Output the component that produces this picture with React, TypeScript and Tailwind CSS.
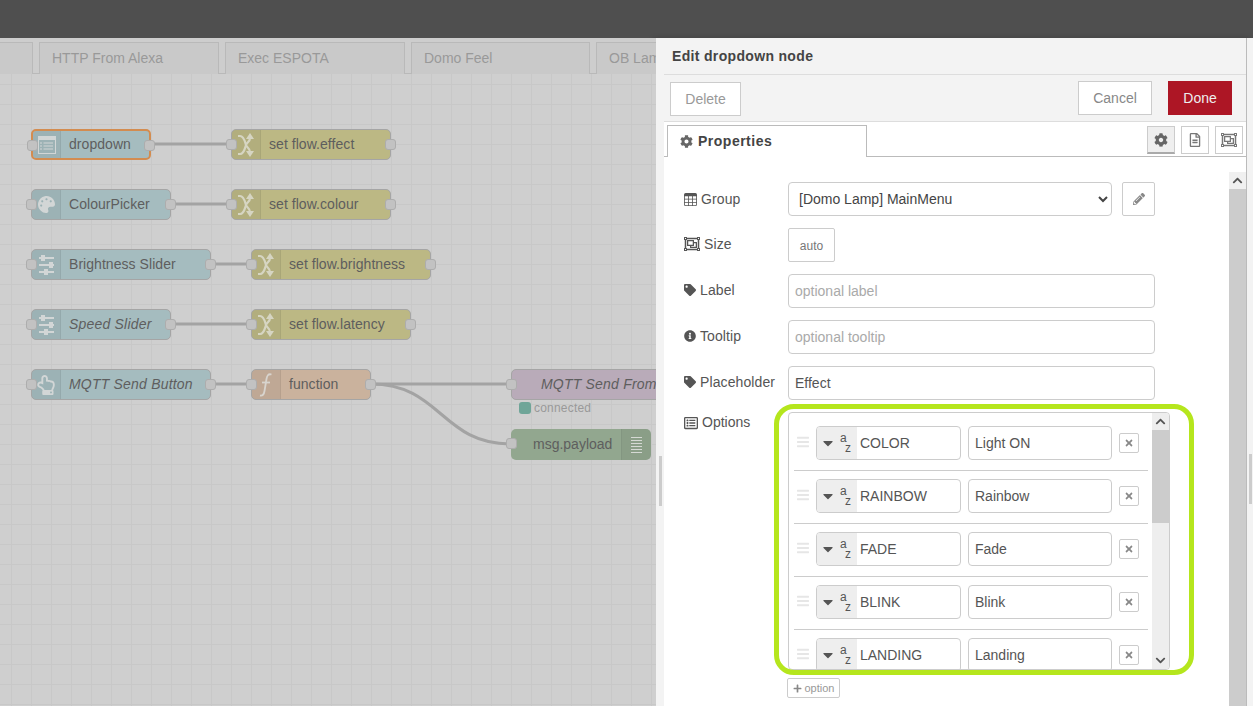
import React from "react";
import {
  FaCaretDown,
  FaChevronDown,
  FaChevronUp,
  FaCog,
  FaBars,
  FaInfoCircle,
  FaPalette,
  FaPencilAlt,
  FaPlus,
  FaRegFileAlt,
  FaRegHandPointUp,
  FaRegListAlt,
  FaRegObjectGroup,
  FaTag,
  FaTimes,
} from "react-icons/fa";
import { BsTable } from "react-icons/bs";

const SwapIcon = () => (
  <svg width="16" height="24" viewBox="0 0 16 24" fill="none" stroke="#d6d5c2" strokeWidth="2.2">
    <path d="M0 21 H2 C6 21 7 15 8 12 C9 9 12 9 12 5" />
    <path d="M0 3 H2 C6 3 7 9 8 12 C9 15 12 15 12 19" />
    <path d="M12 0 L16 6 L8 6 Z" fill="#d6d5c2" stroke="none" />
    <path d="M12 24 L16 18 L8 18 Z" fill="#d6d5c2" stroke="none" />
  </svg>
);

const DropdownIcon = () => (
  <svg width="18" height="18" viewBox="0 0 18 18" fill="none" stroke="#d2d6d6" strokeWidth="1">
    <rect x="0.5" y="0.5" width="17" height="17" />
    <rect x="0.5" y="0.5" width="17" height="3" fill="#d2d6d6" />
    <path d="M2 7H4M5.5 7H15M2 10H4M5.5 10H15M2 13H4M5.5 13H15" />
  </svg>
);

const SliderIcon = () => (
  <svg width="15" height="20" viewBox="0 0 15 20" fill="#d2d6d6" stroke="none">
    <rect x="0" y="2" width="15" height="2" />
    <rect x="0" y="9" width="15" height="2" />
    <rect x="0" y="16" width="15" height="2" />
    <rect x="2" y="0" width="4" height="6" />
    <rect x="10" y="7" width="4" height="6" />
    <rect x="5" y="14" width="4" height="6" />
  </svg>
);

const FunctionIcon = () => (
  <svg width="14" height="24" viewBox="0 0 14 24" fill="none" stroke="#d8d4ce" strokeWidth="1.8">
    <path d="M12.5 1.5 C9 0.5 8 3 7.5 6 L5.5 18 C5 21.5 3.5 23 1 22.5" />
    <path d="M3 9.5H11" />
  </svg>
);

const canvasNodes = [
  { left: 31, top: 129, width: 120, label: "dropdown", bg: "bg-[#a5bcbf]", icon: <DropdownIcon />, selected: true },
  { left: 231, top: 129, width: 160, label: "set flow.effect", bg: "bg-[#bcb884]", icon: <SwapIcon /> },
  { left: 31, top: 189, width: 140, label: "ColourPicker", bg: "bg-[#a5bcbf]", icon: <FaPalette size={17} color="#d2d6d6" /> },
  { left: 231, top: 189, width: 160, label: "set flow.colour", bg: "bg-[#bcb884]", icon: <SwapIcon /> },
  { left: 31, top: 249, width: 180, label: "Brightness Slider", bg: "bg-[#a5bcbf]", icon: <SliderIcon /> },
  { left: 251, top: 249, width: 180, label: "set flow.brightness", bg: "bg-[#bcb884]", icon: <SwapIcon /> },
  { left: 31, top: 309, width: 140, label: "Speed Slider", italic: true, bg: "bg-[#a5bcbf]", icon: <SliderIcon /> },
  { left: 251, top: 309, width: 160, label: "set flow.latency", bg: "bg-[#bcb884]", icon: <SwapIcon /> },
  { left: 31, top: 369, width: 180, label: "MQTT Send Button", italic: true, bg: "bg-[#a5bcbf]", icon: <FaRegHandPointUp size={20} color="#d2d6d6" /> },
  { left: 251, top: 369, width: 120, label: "function", bg: "bg-[#cab29d]", icon: <FunctionIcon /> },
];

const wires = [
  "M151 144H231",
  "M171 204H231",
  "M211 264H251",
  "M171 324H251",
  "M211 384H251",
  "M371 384H511",
  "M371 384C441 384 441 444 511 444",
];

const tabs = ["", "HTTP From Alexa", "Exec ESPOTA", "Domo Feel", "OB Lamp"];

const options = [
  { key: "COLOR", value: "Light ON" },
  { key: "RAINBOW", value: "Rainbow" },
  { key: "FADE", value: "Fade" },
  { key: "BLINK", value: "Blink" },
  { key: "LANDING", value: "Landing" },
];

const Port = ({ className }: { className: string }) => (
  <div className={`absolute top-[9px] h-[11px] w-[11px] rounded-[3px] border border-[#adadad] bg-[#c2c2c2] ${className}`} />
);

type NodeProps = {
  left: number;
  top: number;
  width: number;
  label: string;
  bg: string;
  icon: React.ReactNode;
  italic?: boolean;
  selected?: boolean;
};

const FlowNode = ({ left, top, width, label, bg, icon, italic, selected }: NodeProps) => (
  <div
    className={`absolute flex h-[31px] items-center rounded-[5px] border ${selected ? "border-[#d38c50] border-[2px]" : "border-[#a5a5a5]"} ${bg}`}
    style={{ left, top, width }}
  >
    <div className={`flex h-full shrink-0 items-center justify-center rounded-l-[4px] border-r border-black/5 bg-black/5 ${selected ? "w-[28px]" : "w-[29px]"}`}>{icon}</div>
    <span className={`ml-[8px] whitespace-nowrap text-[14px] text-[#5e5e5e] ${italic ? "italic tracking-[0.2px]" : "tracking-[0.05px]"}`}>{label}</span>
    <Port className="left-[-6px]" />
    <Port className="right-[-6px]" />
  </div>
);

const Canvas = () => (
  <div className="relative min-w-0 flex-1 overflow-hidden bg-[#cfcfcf]">
    <div className="flex h-[36px] gap-[6px] border-b border-[#b9b9b9] bg-[#cdcdcd] pt-[4px] pl-[0px]">
      {tabs.map((t, i) => (
        <div
          key={i}
          className={`h-[32px] shrink-0 border border-b-0 border-[#b9b9b9] bg-[#c9c9c9] pl-[12px] text-[14px] leading-[30px] whitespace-nowrap text-[#999999] ${
            i === 0 ? "ml-[-147px] w-[180px]" : i === 3 ? "w-[179px]" : "w-[180px]"
          }`}
        >
          {t}
        </div>
      ))}
    </div>
    <div className="relative h-[632px] bg-[linear-gradient(#c8c8c8_1px,transparent_1px),linear-gradient(90deg,#c8c8c8_1px,transparent_1px)] bg-[size:20px_20px] bg-[position:11px_10px]">
      <svg className="absolute top-[-74px] left-0" width="656" height="706" fill="none" stroke="#a3a3a3" strokeWidth="3">
        {wires.map((d) => (
          <path key={d} d={d} />
        ))}
      </svg>
      <div className="absolute top-[-74px] left-0 h-[706px] w-[656px]">
        {canvasNodes.map((n) => (
          <FlowNode key={n.label} {...n} />
        ))}
        <div className="absolute top-[369px] left-[511px] flex h-[31px] w-[200px] items-center rounded-[5px] border border-[#a5a5a5] bg-[#b9abb9]">
          <span className="ml-[29px] text-[14px] tracking-[0.2px] whitespace-nowrap text-[#5e5e5e] italic">MQTT Send From</span>
          <Port className="left-[-6px]" />
        </div>
        <div className="absolute top-[402px] left-[519px] flex items-center">
          <div className="h-[12px] w-[12px] rounded-[3px] bg-[#6fa598]" />
          <span className="ml-[3px] text-[12px] leading-[12px] tracking-[0.2px] text-[#999999]">connected</span>
        </div>
        <div className="absolute top-[429px] left-[511px] flex h-[31px] w-[140px] items-center rounded-[5px] bg-[#92a78f]">
          <span className="ml-[22px] text-[14px] whitespace-nowrap text-[#5e5e5e]">msg.payload</span>
          <div className="ml-auto flex h-full w-[30px] flex-col items-center justify-center gap-[2px] rounded-r-[5px] border-l border-black/5 bg-black/5">
            {[0, 1, 2, 3, 4, 5].map((i) => (
              <div key={i} className="h-[1px] w-[11px] bg-[#d5d9d4]" />
            ))}
          </div>
          <Port className="left-[-5px]" />
        </div>
      </div>
    </div>
  </div>
);

const FormRow = ({ icon, label, raised = true, children }: { icon: React.ReactNode; label: string; raised?: boolean; children: React.ReactNode }) => (
  <div className="flex h-[34px] items-center">
    <div className={`flex w-[104px] shrink-0 items-center gap-[4px] text-[14px] tracking-[0.1px] text-[#555555] ${raised ? "pb-[2px]" : ""}`}>
      {icon}
      <span>{label}</span>
    </div>
    {children}
  </div>
);

const TextField = ({ placeholder, value }: { placeholder: string; value?: string }) => (
  <input
    readOnly
    placeholder={placeholder}
    value={value ?? ""}
    className="h-[34px] w-[367px] rounded-[4px] border border-[#cccccc] px-[6px] text-[14px] text-[#555555] placeholder:text-[#aaaaaa]"
  />
);

const OptionRow = ({ optionKey, value, last }: { optionKey: string; value: string; last: boolean }) => (
  <div className={`flex shrink-0 items-start pt-[8px] pb-[10px] ${last ? "" : "h-[53px] border-b border-[#cccccc]"}`}>
    <FaBars size={14} color="#e6e6e6" className="mt-[9px] ml-[3px] w-[12px] shrink-0" />
    <div className="ml-[7px] flex h-[34px] w-[145px] shrink-0 overflow-hidden rounded-[4px] border border-[#cccccc]">
      <div className="flex w-[40px] shrink-0 items-center bg-[#eeeeee] pl-[3px] text-[#555555]">
        <FaCaretDown size={16} />
        <div className="ml-[4px] flex flex-col text-[12px] leading-[10px]">
          <span>a</span>
          <span className="ml-[5px]">z</span>
        </div>
      </div>
      <span className="pl-[3px] text-[14px] leading-[32px] text-[#555555]">{optionKey}</span>
    </div>
    <div className="ml-[7px] h-[34px] w-[144px] shrink-0 rounded-[4px] border border-[#cccccc] pl-[6px] text-[14px] leading-[32px] text-[#555555]">{value}</div>
    <div className="mt-[7px] ml-[7px] flex h-[20px] w-[20px] shrink-0 items-center justify-center rounded-[2px] border border-[#cccccc]">
      <FaTimes size={10} color="#888888" />
    </div>
  </div>
);

const OptionsList = () => (
  <div className="relative h-[258px] w-[382px]">
    <div className="flex h-full w-full overflow-hidden rounded-[4px] border border-[#cccccc]">
      <div className="flex min-w-0 flex-1 flex-col overflow-hidden pt-[5px] pr-[4px] pl-[5px]">
        {options.map((o, i) => (
          <OptionRow key={o.key} optionKey={o.key} value={o.value} last={i === options.length - 1} />
        ))}
      </div>
      <div className="flex w-[17px] shrink-0 flex-col bg-[#eeeeee]">
        <div className="flex h-[17px] items-center justify-center">
          <FaChevronUp size={11} color="#555555" />
        </div>
        <div className="h-[93px] bg-[#cccccc]" />
        <div className="mt-auto flex h-[17px] items-center justify-center">
          <FaChevronDown size={11} color="#555555" />
        </div>
      </div>
    </div>
    {/* green highlight someone drew over the screenshot */}
    <div className="pointer-events-none absolute top-[-8px] left-[-14px] h-[271px] w-[420px] rounded-[20px] border-[5px] border-[#b5e61d]" />
  </div>
);

const Tray = () => (
  <div className="flex w-[597px] shrink-0 bg-[#f3f3f3] shadow-[-3px_0_5px_rgba(0,0,0,0.18)]">
    <div className="flex w-[8px] shrink-0 items-start justify-center">
      <div className="mt-[418px] h-[50px] w-[3px] bg-[#cccccc]" />
    </div>
    <div className="flex w-[583px] shrink-0 flex-col border-r border-[#bbbbbb] bg-white">
      <div className="h-[37px] shrink-0 border-b border-[#dddddd] bg-[#f3f3f3] pl-[8px] text-[14px] leading-[36px] font-bold tracking-[0.33px] text-[#444444]">
        Edit dropdown node
      </div>
      <div className="flex h-[47px] shrink-0 items-start justify-between border-b border-[#dddddd] bg-[#f3f3f3] pt-[6px] pr-[14px] pl-[6px]">
        <button className="mt-[1px] h-[34px] w-[71px] border border-[#cccccc] bg-white text-[14px] text-[#999999]">Delete</button>
        <div className="flex gap-[16px]">
          <button className="h-[34px] w-[74px] border border-[#cccccc] bg-white text-[14px] text-[#888888]">Cancel</button>
          <button className="h-[34px] w-[64px] bg-[#ad1625] text-[14px] text-[#eeeeee]">Done</button>
        </div>
      </div>
      <div className="relative flex h-[35px] shrink-0 items-start justify-end gap-[6px] border-b border-[#bbbbbb] pt-[4px] pr-[3px]">
        <div className="absolute top-[3px] left-[3px] flex h-[32px] w-[200px] items-center gap-[5px] border border-b-0 border-[#bbbbbb] bg-white pl-[12px] text-[14px] font-bold tracking-[0.5px] text-[#444444]">
          <FaCog size={13} color="#666666" />
          Properties
        </div>
        <div className="flex h-[28px] w-[28px] items-center justify-center border border-b-[2px] border-[#cccccc] border-b-[#aaaaaa] bg-[#efefef]">
          <FaCog size={14} color="#666666" />
        </div>
        <div className="flex h-[28px] w-[28px] items-center justify-center border border-[#cccccc]">
          <FaRegFileAlt size={14} color="#777777" />
        </div>
        <div className="flex h-[28px] w-[28px] items-center justify-center border border-[#cccccc]">
          <FaRegObjectGroup size={16} color="#777777" />
        </div>
      </div>
      <div className="flex min-h-0 flex-1 pt-[15px]">
        <div className="flex min-w-0 flex-1 flex-col gap-[12px] pt-[10px] pl-[20px]">
          <FormRow icon={<BsTable size={13} />} label="Group" raised={false}>
            <select className="h-[34px] w-[324px] rounded-[4px] border border-[#cccccc] pl-[6px] text-[14px] text-[#444444]">
              <option>[Domo Lamp] MainMenu</option>
            </select>
            <div className="ml-[10px] flex h-[34px] w-[33px] items-center justify-center rounded-[2px] border border-[#cccccc]">
              <FaPencilAlt size={12} color="#888888" />
            </div>
          </FormRow>
          <FormRow icon={<FaRegObjectGroup size={16} />} label="Size">
            <div className="h-[34px] w-[47px] rounded-[2px] border border-[#cccccc] text-center text-[12px] leading-[34px] tracking-normal text-[#777777]">auto</div>
          </FormRow>
          <FormRow icon={<FaTag size={12} />} label="Label">
            <TextField placeholder="optional label" />
          </FormRow>
          <FormRow icon={<FaInfoCircle size={12} />} label="Tooltip">
            <TextField placeholder="optional tooltip" />
          </FormRow>
          <FormRow icon={<FaTag size={12} />} label="Placeholder">
            <TextField placeholder="" value="Effect" />
          </FormRow>
          <div className="flex items-start">
            <div className="flex w-[104px] shrink-0 items-center gap-[4px] text-[14px] text-[#555555]">
              <FaRegListAlt size={14} />
              <span>Options</span>
            </div>
            <div className="flex flex-col items-start">
              <OptionsList />
              <button className="mt-[8px] ml-[-1px] flex h-[20px] w-[53px] items-center justify-center gap-[3px] rounded-[2px] border border-[#cccccc] text-[11px] text-[#999999]">
                <FaPlus size={9} color="#888888" />
                option
              </button>
            </div>
          </div>
        </div>
        <div className="w-[17px] shrink-0 bg-[#cccccc]">
          <div className="flex h-[17px] items-center justify-center bg-[#f0f0f0]">
            <FaChevronUp size={11} color="#555555" />
          </div>
        </div>
      </div>
    </div>
    <div className="flex min-w-0 flex-1 items-start justify-center">
      <div className="mt-[416px] h-[50px] w-[3px] bg-[#cccccc]" />
    </div>
  </div>
);

export default function App() {
  return (
    <div className="flex h-[706px] w-[1253px] flex-col overflow-hidden bg-white font-['Liberation_Sans',Arial,sans-serif]">
      <div className="h-[38px] shrink-0 bg-[#4f4f4f]" />
      <div className="flex min-h-0 flex-1">
        <Canvas />
        <Tray />
      </div>
    </div>
  );
}
